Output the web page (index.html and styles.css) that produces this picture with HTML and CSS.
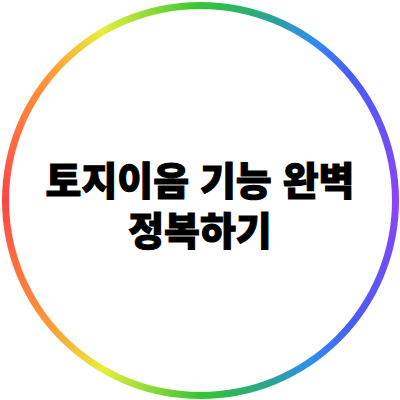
FILE: index.html
```html
<!DOCTYPE html>
<html lang="ko">
<head>
    <meta charset="UTF-8">
    <meta name="viewport" content="width=device-width, initial-scale=1.0">
    <title>토지이음 기능 완벽 정복하기</title>
    <link rel="stylesheet" href="styles.css">
</head>
<body>
    <div class="ring">
        <div class="inner">
            <h1 class="title">토지이음 기능 완벽<br>정복하기</h1>
        </div>
    </div>
</body>
</html>
```

FILE: styles.css
```css
html, body {
    margin: 0;
    background: #ffffff;
}
body {
    width: 400px;
    height: 400px;
    display: flex;
    align-items: center;
    justify-content: center;
}
.ring {
    width: 397px;
    height: 397px;
    border-radius: 50%;
    padding: 7px;
    box-sizing: border-box;
    background: conic-gradient(
        #33c633 0deg,
        #2aa58c 20deg,
        #2f8cf2 35deg,
        #4a5cf5 50deg,
        #8a45f7 90deg,
        #4a5cf5 130deg,
        #2f8cf2 145deg,
        #2aa58c 160deg,
        #33c633 180deg,
        #e8ee3c 210deg,
        #ff9a38 230deg,
        #ff4444 270deg,
        #ff9a38 310deg,
        #e8ee3c 330deg,
        #33c633 360deg
    );
    display: flex;
}
.inner {
    flex: 1;
    border-radius: 50%;
    background: #ffffff;
    display: flex;
    align-items: center;
    justify-content: center;
}
.title {
    margin: 0;
    padding-top: 6px;
    font-family: "Noto Sans CJK KR", sans-serif;
    font-weight: 900;
    font-size: 39px;
    line-height: 50px;
    text-align: center;
    color: #000000;
    -webkit-text-stroke: 1px #000000;
}
```
